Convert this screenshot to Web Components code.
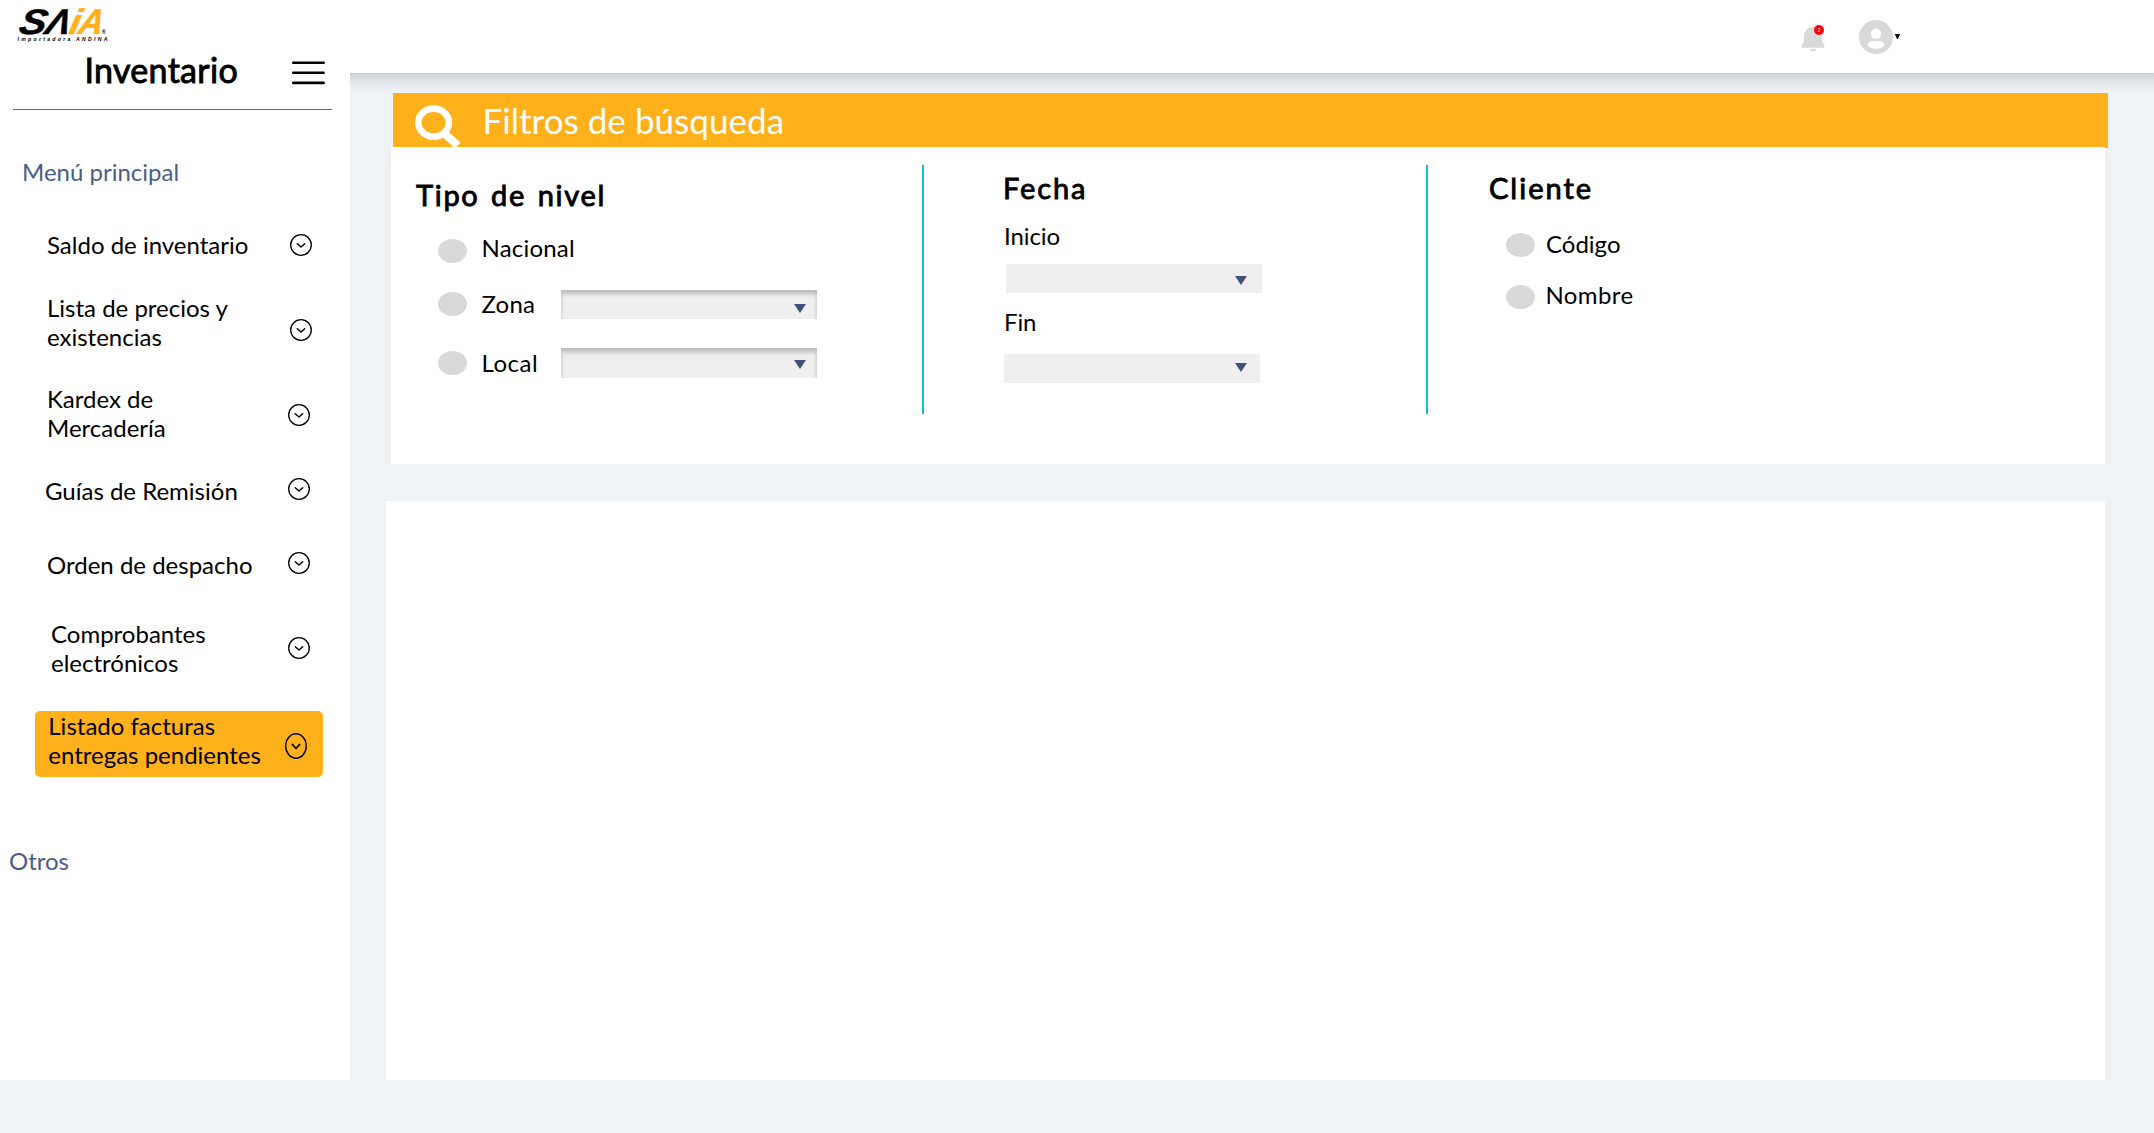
<!DOCTYPE html>
<html lang="es">
<head>
<meta charset="utf-8">
<title>Inventario</title>
<style>
html,body{margin:0;height:100%}
body{background:#eff3f6;font-family:Lato,"Open Sans",sans-serif;color:#000;overflow:hidden}
</style>
</head>
<body>
<app-shell></app-shell>
<script>
function define(name, css, html){
  customElements.define(name, class extends HTMLElement{
    constructor(){
      super();
      const t=document.createElement('template');
      t.innerHTML='<style>:host{display:block;box-sizing:border-box}*{box-sizing:border-box}'+css+'</style>'+html;
      this.attachShadow({mode:'open'}).append(t.content.cloneNode(true));
    }
  });
}

define('saia-logo', ':host{width:120px;height:46px}svg{display:block}', `
<svg width="120" height="46" viewBox="0 0 120 46" font-family="Liberation Sans, sans-serif" font-weight="700" font-style="italic">
  <g font-size="35.5" stroke-width=".5" transform="translate(0 33.700) skewX(-13)">
    <text x="17.500" y="0" textLength="27" lengthAdjust="spacingAndGlyphs" stroke="#000">S</text>
    <text x="44" y="0" textLength="24.500" lengthAdjust="spacingAndGlyphs" stroke="#000">Λ</text>
    <text x="67.500" y="0" textLength="11" lengthAdjust="spacingAndGlyphs" fill="#ffb11b" stroke="#ffb11b">i</text>
    <text x="77" y="0" textLength="24.500" lengthAdjust="spacingAndGlyphs" fill="#ffb11b" stroke="#ffb11b">A</text>
  </g>
  <text x="101.800" y="33.500" font-size="5.500" font-style="normal">®</text>
  <text x="17.500" y="41" font-size="5.200" textLength="90">Importadora ANDINA</text>
</svg>`);

define('bell-icon', ':host{width:24px;height:28px}svg{display:block}', `
<svg width="24" height="28" viewBox="0 0 24 28">
  <path fill="#d9d9d9" d="M12 1.500C7 2.200 3.200 6.200 3 11v4.500c0 1.600-.7 2.500-1.600 3.300C.6 19.500.6 20 .6 22.700h22.800c0-2.700 0-3.200-.8-3.900-.9-.8-1.600-1.700-1.600-3.300V11C20.800 6 17 2 12 1.500zM8.800 24h6.400c-.4 1.500-1.600 2.300-3.200 2.300S9.200 25.500 8.800 24z"/>
  <circle cx="18" cy="5" r="5" fill="#f00"/>
  <text x="18" y="6.800" font-family="Lato,sans-serif" font-size="5" text-anchor="middle" fill="#fff">2</text>
</svg>`);

define('user-menu', ':host{display:flex;width:44px;height:34px}svg{display:block}', `
<svg width="44" height="34" viewBox="0 0 44 34">
  <circle cx="17" cy="17" r="17" fill="#d9d9d9"/>
  <circle cx="17" cy="13.700" r="5.200" fill="#fff"/>
  <ellipse cx="17" cy="24.700" rx="8.400" ry="4" fill="#fff"/>
  <path d="M35.800 14h5.400l-2.300 5h-.8z"/>
</svg>`);

define('top-bar', `:host{display:flex;height:73px;background:#fff;align-items:flex-start}
bell-icon{margin:25px 0 0 1681px}user-menu{margin:20px 0 0 34px}`,
`<saia-logo></saia-logo><bell-icon></bell-icon><user-menu></user-menu>`);

define('chevron-circle', ':host{width:22px;height:var(--h,22px)}svg{display:block;width:100%;height:100%}', `
<svg viewBox="0 0 22 22" preserveAspectRatio="none" fill="none" stroke="#000">
  <circle cx="11" cy="11" r="10.300" stroke-width="1.300"/>
  <path d="M7.300 9.700l3.700 3.300 3.700-3.300" stroke-width="1.500" stroke-linecap="round" stroke-linejoin="round"/>
</svg>`);

define('menu-item', `:host{display:flex;align-items:flex-start;margin-top:var(--gap,0);padding-left:var(--left,47px);font-size:24px;line-height:29px;white-space:nowrap}
.label{flex:none;width:var(--w,243px)}chevron-circle{flex:none;margin-top:var(--drop,4px)}`,
`<div class="label"><slot></slot></div><chevron-circle></chevron-circle>`);

define('side-menu', `:host{width:350px;height:1007px;background:#fff;overflow:visible}
.head{display:flex;height:36px;margin-top:-27px;padding-left:84.500px}
.head h1{margin:6px 0 0;width:207.500px;font-size:34px;line-height:36px;font-weight:400;letter-spacing:.3px;-webkit-text-stroke:.9px #000}
.head svg{display:block;margin-top:14px}
.rule{height:1.400px;background:#576b93;width:319px;margin:27px 0 0 13px}
.sec{font-size:24px;line-height:29px;color:#4b5d86}
.s1{margin:46.600px 0 0 22px}.s2{margin:69px 0 0 9px}
.active{margin:34px 0 0 35px;width:288px;height:66px;background:#ffb11b;border-radius:5px}`,
`<div class="head"><h1>Inventario</h1>
<svg width="33" height="26" viewBox="0 0 33 26" stroke="#000" stroke-width="2.600" stroke-linecap="round"><path d="M1.300 2.700h30.300M1.300 12.800h30.300M1.300 22.900h30.300"/></svg></div>
<div class="rule"></div>
<div class="sec s1">Menú principal</div>
<menu-item style="--gap:44px">Saldo de inventario</menu-item>
<menu-item style="--gap:34px;--drop:26px">Lista de precios y<br>existencias</menu-item>
<menu-item style="--gap:33px;--drop:20px;--w:241px">Kardex de<br>Mercadería</menu-item>
<menu-item style="--gap:34px;--drop:2px;--w:243px;--left:45px">Guías de Remisión</menu-item>
<menu-item style="--gap:45px;--drop:2px;--w:241px">Orden de despacho</menu-item>
<menu-item style="--gap:40px;--drop:18px;--w:237px;--left:51px">Comprobantes<br>electrónicos</menu-item>
<div class="active"><menu-item style="--left:13.300px;--w:236.700px;--drop:22px;--h:26px">Listado facturas<br>entregas pendientes</menu-item></div>
<div class="sec s2">Otros</div>`);

define('select-box', `:host{display:flex;justify-content:flex-end;width:256px;height:29.500px;background:#efefef}
:host([inset]){box-shadow:inset 0 4px 4px rgba(0,0,0,.22)}
svg{display:block;margin:var(--arrow-top,14px) var(--arrow-right,11px) 0 0}`,
`<svg width="12" height="9" viewBox="0 0 12 9"><path d="M0 0h12L6 9z" fill="#425173"/></svg>`);

define('radio-option', `:host{display:flex;height:29.500px;margin-top:var(--gap,0);align-items:flex-start}
.dot{flex:none;width:29px;height:24px;border-radius:50%;background:#d9d9d9;margin-top:var(--dot,0)}
.t{flex:none;font-size:24px;line-height:29px;letter-spacing:var(--ls,.2px);margin-left:var(--tl,14.500px);width:79.500px;white-space:nowrap}`,
`<div class="dot"></div><div class="t"><slot></slot></div><slot name="field"></slot>`);

define('filter-title', `:host{font-size:29px;line-height:34px;font-weight:400;-webkit-text-stroke:.9px #000;white-space:nowrap;letter-spacing:var(--ls,2px)}`, `<slot></slot>`);

define('filter-banner', `:host{display:flex;width:1715px;height:54.500px;background:#ffb11b;color:#fff}
svg{display:block;margin:11px 0 0 21px}
.t{margin:6px 0 0 20.500px;font-size:35px;line-height:43px;white-space:nowrap;letter-spacing:.04px}`,
`<svg width="48" height="44" viewBox="0 0 48 44" fill="none" stroke="#fff"><ellipse cx="19.600" cy="18.600" rx="15.300" ry="14" stroke-width="6.600"/><path d="M30.500 29.500l13.300 12" stroke-width="8"/></svg>
<div class="t">Filtros de búsqueda</div>`);

define('filter-panel', `:host{width:1714px;height:317.500px;background:#fff;display:flex;align-items:flex-start;padding-top:18px}
.sep{width:2px;height:249px;background:#14bccf;flex:none}
.a,.b,.c{flex:none}
.a{width:531px;padding:13px 0 0 25px}.a radio-option{margin-left:22px}
.b{width:502px;padding:6px 0 0 79px}
.c{padding:6px 0 0 61px}.c radio-option{margin-left:17px}
.l{font-size:24px;line-height:29px;letter-spacing:-.1px;padding-left:1px}
select-box{flex:none}`,
`<div class="a"><filter-title style="word-spacing:2.500px;--ls:1.700px">Tipo de nivel</filter-title>
<radio-option style="--gap:21px;--dot:6px">Nacional</radio-option>
<radio-option style="--gap:26.500px;--dot:3px">Zona<select-box slot="field" inset style="margin-top:1px"></select-box></radio-option>
<radio-option style="--gap:29.500px;--dot:3px;--ls:.5px">Local<select-box slot="field" inset style="margin-top:.700px;--arrow-top:11.500px"></select-box></radio-option></div>
<div class="sep"></div>
<div class="b"><filter-title style="--ls:1.900px">Fecha</filter-title>
<div class="l" style="margin-top:16px">Inicio</div>
<select-box style="margin:14px 0 0 3px;--arrow-top:12px;--arrow-right:15px"></select-box>
<div class="l" style="margin-top:13.500px">Fin</div>
<select-box style="margin:18px 0 0 1px;--arrow-top:9px;--arrow-right:13px"></select-box></div>
<div class="sep"></div>
<div class="c"><filter-title>Cliente</filter-title>
<radio-option style="--gap:24px;--dot:4px;--tl:11px;--ls:0px">Código</radio-option>
<radio-option style="--gap:21.500px;--dot:5px;--tl:10.500px;--ls:.400px">Nombre</radio-option></div>`);

define('app-shell', `:host{width:2154px;height:1133px;background:#eff3f6}
.body{display:flex;align-items:flex-start}
side-menu{flex:none}
main{flex:1;height:1060px;padding-top:20px;background:linear-gradient(#cdd0d2 0,#d8dbde 4px,#e6eaee 10px,#eff3f6 19px) no-repeat 0 0/100% 20px}
filter-banner{margin-left:43px}filter-panel{margin:-1px 0 0 41px}
.results{margin:37px 0 0 36px;width:1719px;height:579px;background:#fff}`,
`<top-bar></top-bar><div class="body"><side-menu></side-menu><main><filter-banner></filter-banner><filter-panel></filter-panel><div class="results"></div></main></div>`);
</script>
</body>
</html>
